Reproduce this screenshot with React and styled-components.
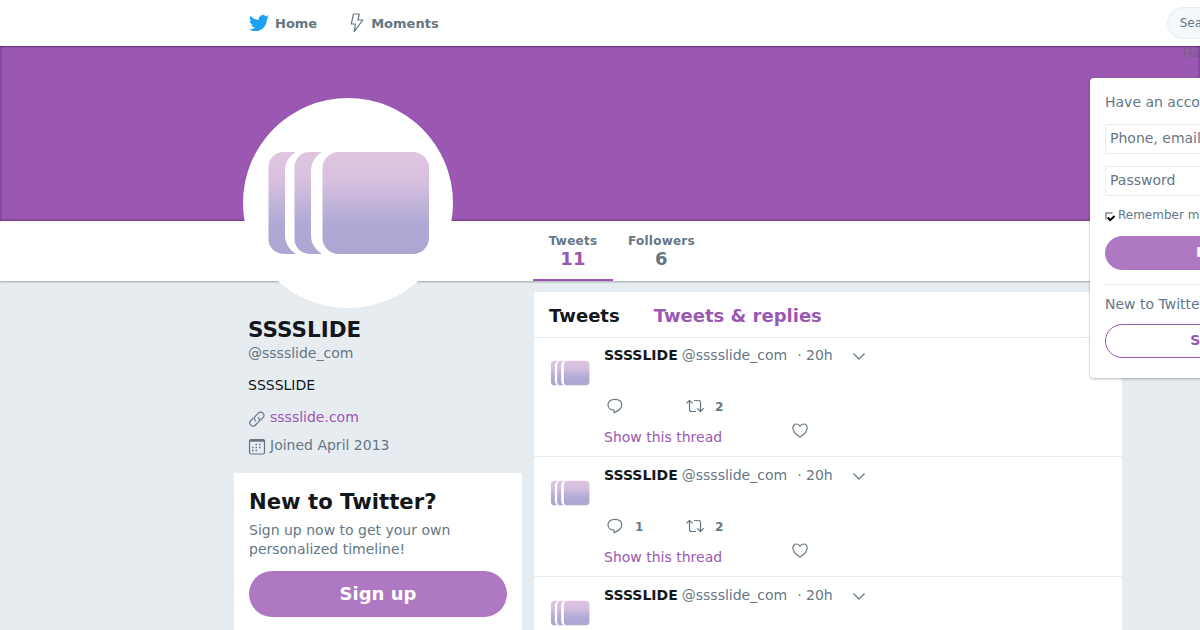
import styled, { createGlobalStyle } from "styled-components";
import { FaTwitter } from "react-icons/fa";

const GlobalStyle = createGlobalStyle`
  * {
    box-sizing: border-box;
  }
  body {
    margin: 0;
    background: #e6ecf0;
    color: #14171a;
    font-family: "DejaVu Sans", sans-serif;
    font-size: 14px;
    line-height: 20px;
  }
  h1, h2, p {
    margin: 0;
  }
`;

const tweets = [
  { id: 1, replies: null, retweets: 2 },
  { id: 2, replies: 1, retweets: 2 },
  { id: 3, replies: null, retweets: 2 },
];

function SlideLogo({ id }) {
  const fill = `url(#${id})`;
  return (
    <svg viewBox="0 0 200 200" width="100%" height="100%" display="block">
      <defs>
        <linearGradient
          id={id}
          gradientUnits="userSpaceOnUse"
          x1="0"
          y1="49"
          x2="0"
          y2="151"
        >
          <stop offset="0" stopColor="#dfc5e0" />
          <stop offset="0.28" stopColor="#d7c0de" />
          <stop offset="0.7" stopColor="#b0a9d6" />
          <stop offset="1" stopColor="#aea6d1" />
        </linearGradient>
      </defs>
      <rect x="20.5" y="49" width="60" height="102" rx="15" fill={fill} />
      <rect x="37" y="46.5" width="60" height="107" rx="21" fill="#fff" />
      <rect x="46.5" y="49" width="60" height="102" rx="15" fill={fill} />
      <rect x="63" y="46.5" width="60" height="107" rx="21" fill="#fff" />
      <rect x="74.5" y="49" width="106.5" height="102" rx="16" fill={fill} />
    </svg>
  );
}

function BoltIcon() {
  return (
    <Line width="14" height="20" viewBox="0 0 14 20">
      <path d="M3.500 1h5.800L8 7h4.800L4.300 18.600l1-7.600H1.300z" />
    </Line>
  );
}

function LinkIcon() {
  return (
    <Line width="18" height="18" viewBox="0 0 18 18">
      <path d="M7.600 10.800C6 9.400 6 7.600 7.200 6.400l3.100-3.200c1.400-1.400 3.400-1.400 4.700-0.100 1.300 1.300 1.300 3.300 0 4.600l-2.400 2.400" />
      <path d="M10.200 7.400c1.600 1.400 1.600 3.200 0.400 4.400l-3.100 3.200c-1.400 1.400-3.400 1.400-4.700 0.100-1.300-1.300-1.300-3.300 0-4.600l2.400-2.400" />
    </Line>
  );
}

function CalendarIcon() {
  return (
    <Line width="18" height="18" viewBox="0 0 18 18">
      <rect x="1.500" y="1.500" width="15" height="14.500" rx="1.500" />
      <path d="M2 2.800h14" strokeWidth="1.800" />
      <path
        d="M7.500 6.500h6.500M4 9.500h10M4 12.500h6.500"
        strokeWidth="1.500"
        strokeDasharray="1.500 2"
        strokeLinecap="butt"
      />
    </Line>
  );
}

function ReplyIcon() {
  return (
    <Line width="16" height="16" viewBox="0 0 16 16">
      <path d="M8 1.300c-4.200 0-7 2.200-7 5.500 0 3.200 2.600 5.200 6 5.200v2.700c3-1.200 7.800-4 7.800-8 0-3.200-2.700-5.400-6.800-5.400z" />
    </Line>
  );
}

function RetweetIcon() {
  return (
    <Line width="18" height="14" viewBox="0 0 18 14">
      <path d="M0.700 4.100L3.500 1.300l2.800 2.800M3.500 1.500v9q0 2 2 2h4" />
      <path d="M11.700 9.700l2.800 2.800 2.800-2.800M14.500 12.300V3.500q0-2-2-2H8.500" />
    </Line>
  );
}

function HeartIcon() {
  return (
    <Line width="16" height="15" viewBox="0 0 16 15">
      <path d="M8 14C4 11.500 0.900 8.500 0.900 4.900 0.900 2.600 2.500 1 4.500 1 6 1 7.300 2 8 3.500 8.700 2 10 1 11.500 1c2 0 3.600 1.600 3.600 3.900C15.100 8.500 12 11.500 8 14z" />
    </Line>
  );
}

function CaretIcon() {
  return (
    <Line width="12" height="7" viewBox="0 0 12 7">
      <path d="M0.700 0.800L6 6l5.300-5.200" />
    </Line>
  );
}

function CheckIcon() {
  return (
    <svg width="10" height="10" viewBox="0 0 10 10">
      <path d="M1 7.500V1h6.500" fill="none" stroke="#888" strokeWidth="1.500" />
      <path d="M2.800 5.500l2.400 2.600L9.500 4" fill="none" stroke="#000" strokeWidth="2" />
    </svg>
  );
}

function Tweet({ tweet }) {
  return (
    <TweetItem>
      <TweetAvatar>
        <SlideLogo id={`slide-${tweet.id}`} />
      </TweetAvatar>
      <div>
        <TweetHeader>
          <strong>SSSSLIDE</strong>
          <Handle>@sssslide_com</Handle>
          <Time>· 20h</Time>
          <CaretIcon />
        </TweetHeader>
        <Actions>
          <Action>
            <ReplyIcon />
            <Count>{tweet.replies}</Count>
          </Action>
          <Action>
            <RetweetIcon />
            <Count>{tweet.retweets}</Count>
          </Action>
        </Actions>
        <ThreadRow>
          <ThreadLink>Show this thread</ThreadLink>
          <HeartIcon />
        </ThreadRow>
      </div>
    </TweetItem>
  );
}

export default function App() {
  return (
    <Page>
      <GlobalStyle />
      <TopBar>
        <NavItem>
          <FaTwitter size={20} color="#1da1f2" />
          <NavLabel>Home</NavLabel>
        </NavItem>
        <NavItem>
          <BoltIcon />
          <NavLabel>Moments</NavLabel>
        </NavItem>
        <Search>Search Twitter</Search>
      </TopBar>

      <Banner>
        <AccountPrompt>Have an account?</AccountPrompt>
      </Banner>
      <StatsBar>
        <Stat $active>
          Tweets
          <StatValue $active>11</StatValue>
        </Stat>
        <Stat>
          Followers
          <StatValue>6</StatValue>
        </Stat>
      </StatsBar>
      <ProfileAvatar>
        <SlideLogo id="slide-profile" />
      </ProfileAvatar>

      <Columns>
        <Sidebar>
          <Profile>
            <ProfileName>SSSSLIDE</ProfileName>
            <ProfileHandle>@sssslide_com</ProfileHandle>
            <Bio>SSSSLIDE</Bio>
            <Meta $link>
              <LinkIcon />
              <span>sssslide.com</span>
            </Meta>
            <Meta>
              <CalendarIcon />
              <span>Joined April 2013</span>
            </Meta>
          </Profile>
          <SignupCard>
            <SignupTitle>New to Twitter?</SignupTitle>
            <SignupText>
              Sign up now to get your own personalized timeline!
            </SignupText>
            <SignupButton>Sign up</SignupButton>
          </SignupCard>
        </Sidebar>
        <Timeline>
          <TimelineHeader>
            <Tab $active>Tweets</Tab>
            <Tab>Tweets &amp; replies</Tab>
          </TimelineHeader>
          <TweetList>
            {tweets.map((tweet) => (
              <Tweet key={tweet.id} tweet={tweet} />
            ))}
          </TweetList>
        </Timeline>
      </Columns>

      <LoginMenu>
        <p>Have an account?</p>
        <Field>Phone, email or username</Field>
        <Field>Password</Field>
        <Remember>
          <CheckIcon />
          Remember me
        </Remember>
        <PillButton>Log in</PillButton>
        <Divider />
        <p>New to Twitter?</p>
        <PillButton $outline>Sign up</PillButton>
      </LoginMenu>
    </Page>
  );
}

const Page = styled.div`
  position: relative;
  width: 1200px;
  height: 630px;
  overflow: hidden;
`;

const Line = styled.svg`
  flex: none;
  fill: none;
  stroke: #657786;
  stroke-width: 1.2;
  stroke-linejoin: round;
  stroke-linecap: round;
`;

const TopBar = styled.header`
  display: flex;
  align-items: center;
  height: 46px;
  padding-left: 249px;
  background: #fff;
`;

const NavItem = styled.div`
  display: flex;
  align-items: center;
  gap: 6px;
  margin-right: 33px;
  color: #66757f;
  font-size: 13px;
  font-weight: bold;

  & + & {
    gap: 7px;
    margin-right: 32px;
  }
`;

const NavLabel = styled.span`
  padding-top: 2px;
`;

const Search = styled.div`
  flex: none;
  width: 220px;
  height: 32px;
  margin-left: 696px;
  padding: 5px 12px;
  border: 1px solid #e6ecf0;
  border-radius: 16px;
  background: #f5f8fa;
  color: #657786;
  font-size: 12px;
`;

const Banner = styled.div`
  height: 175px;
  padding-left: 1183px;
  background: #9a58b3;
  box-shadow: inset 0 0 3px rgba(0, 0, 0, 0.5), inset 0 1px 0 rgba(0, 0, 0, 0.2);
`;

const AccountPrompt = styled.div`
  padding-top: 1px;
  color: #66606f;
  font-size: 12px;
  line-height: 12px;
  opacity: 0.7;
  white-space: nowrap;
`;

const StatsBar = styled.nav`
  display: flex;
  height: 60px;
  padding-left: 533px;
  background: #fff;
  box-shadow: 0 1px 2px rgba(0, 0, 0, 0.3);
`;

const Stat = styled.div`
  display: flex;
  flex-direction: column;
  align-items: center;
  min-width: 80px;
  padding: 12px 15px 0;
  border-bottom: 2px solid ${(props) => (props.$active ? "#9a58b3" : "transparent")};
  color: #657786;
  font-size: 12px;
  font-weight: bold;
  letter-spacing: 0.02em;
  line-height: 16px;
`;

const StatValue = styled.span`
  color: ${(props) => (props.$active ? "#9a58b3" : "#657786")};
  font-size: 18px;
  line-height: 20px;
`;

const ProfileAvatar = styled.div`
  position: absolute;
  top: 98px;
  left: 243px;
  width: 210px;
  height: 210px;
  padding: 5px;
  border-radius: 50%;
  background: #fff;
`;

const Columns = styled.main`
  display: flex;
  gap: 12px;
  padding: 11px 0 0 234px;
`;

const Sidebar = styled.aside`
  width: 288px;
`;

const Profile = styled.section`
  height: 181px;
  padding: 25px 14px 0;
`;

const ProfileName = styled.h1`
  font-size: 21.5px;
  line-height: 26px;
`;

const ProfileHandle = styled.p`
  color: #657786;
`;

const Bio = styled.p`
  margin: 12px 0;
`;

const Meta = styled.div`
  display: flex;
  gap: 4px;
  height: 28px;
  color: ${(props) => (props.$link ? "#9a58b3" : "#657786")};

  svg {
    margin-top: 3px;
  }
`;

const SignupCard = styled.section`
  height: 220px;
  padding: 15px;
  background: #fff;
`;

const SignupTitle = styled.h2`
  font-size: 21.2px;
  line-height: 28px;
`;

const SignupText = styled.p`
  margin: 5px 0 12px;
  color: #657786;
  line-height: 19px;
`;

const SignupButton = styled.div`
  height: 46px;
  border-radius: 23px;
  background: #ae79c2;
  color: #fff;
  font-size: 18px;
  font-weight: bold;
  line-height: 46px;
  text-align: center;
`;

const Timeline = styled.section`
  width: 588px;
  background: #fff;
`;

const TimelineHeader = styled.div`
  display: flex;
  gap: 34px;
  height: 46px;
  padding: 14px 15px 0;
  border-bottom: 1px solid #e6ecf0;
`;

const Tab = styled.div`
  color: ${(props) => (props.$active ? "#14171a" : "#9a58b3")};
  font-size: 18px;
  font-weight: bold;
`;

const TweetList = styled.div`
  margin-top: -1px;
`;

const TweetItem = styled.article`
  display: flex;
  gap: 10px;
  height: 120px;
  padding: 8px 12px 0;
  border-bottom: 1px solid #e6ecf0;
`;

const TweetAvatar = styled.div`
  width: 48px;
  height: 48px;
  margin-top: 4px;
`;

const TweetHeader = styled.div`
  display: flex;
  align-items: center;

  svg {
    margin-top: 2px;
  }
`;

const Handle = styled.span`
  margin-left: 4px;
  color: #657786;
`;

const Time = styled.span`
  margin: 0 20px 0 10px;
  color: #657786;
`;

const Actions = styled.div`
  display: flex;
  height: 16px;
  margin-top: 33px;
  padding-left: 3px;
`;

const Action = styled.div`
  display: flex;
  align-items: center;
  gap: 12px;
  width: 79px;

  & + & {
    gap: 11px;
  }
`;

const Count = styled.span`
  padding-top: 2px;
  color: #657786;
  font-size: 12px;
  font-weight: bold;
`;

const ThreadRow = styled.div`
  display: flex;
  gap: 70px;
  margin-top: 9px;
`;

const ThreadLink = styled.div`
  margin-top: 4px;
  color: #9a58b3;
`;

const LoginMenu = styled.div`
  position: absolute;
  top: 78px;
  left: 1090px;
  width: 260px;
  height: 300px;
  padding: 14px 15px 0;
  border-radius: 4px;
  background: #fff;
  box-shadow: 0 1px 3px rgba(0, 0, 0, 0.3);
  color: #657786;
`;

const Field = styled.div`
  height: 30px;
  margin-top: 12px;
  padding: 3px 4px;
  border: 1px solid #e6ecf0;
  border-radius: 3px;
`;

const Remember = styled.div`
  display: flex;
  align-items: center;
  gap: 3px;
  margin: 9px 0 11px;
  font-size: 12px;

  svg {
    margin-top: 4px;
  }
`;

const PillButton = styled.div`
  height: 34px;
  border: 1px solid ${(props) => (props.$outline ? "#9a58b3" : "#ae79c2")};
  border-radius: 17px;
  background: ${(props) => (props.$outline ? "#fff" : "#ae79c2")};
  color: ${(props) => (props.$outline ? "#9a58b3" : "#fff")};
  font-weight: bold;
  line-height: 30px;
  text-align: center;
`;

const Divider = styled.div`
  height: 1px;
  margin: 14px 0 9px;
  background: #e6ecf0;

  & ~ p {
    margin-bottom: 10px;
  }
`;
